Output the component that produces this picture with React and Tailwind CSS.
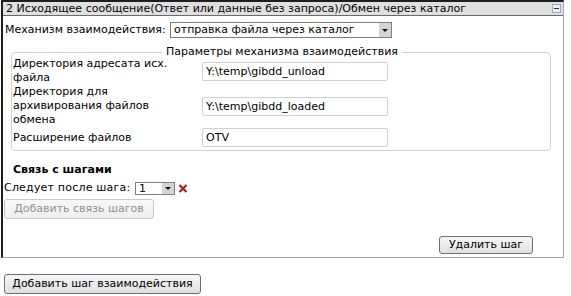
import React from "react";

function Arrow() {
  return (
    <div className="w-0 h-0 border-l-[3px] border-r-[3px] border-t-[3px] border-l-transparent border-r-transparent border-t-[#111]" />
  );
}

function Field({ value }) {
  return (
    <div className="w-[186px] h-[19px] border border-[#d0d0d0] rounded-[2px] bg-white pl-[3px] leading-[17px] whitespace-nowrap">
      {value}
    </div>
  );
}

function Btn({ children, disabled, w }) {
  return (
    <div
      className={`${w} flex items-center justify-center rounded-[3px] border whitespace-nowrap bg-gradient-to-b ${
        disabled ? "border-[#c8c8c8] text-[#909090] from-[#f8f8f8] to-[#eeeeee]" : "border-[#6e6e6e] text-black from-[#f7f7f7] to-[#e0e0e0]"
      }`}
    >
      {children}
    </div>
  );
}

function XIcon() {
  return (
    <svg width="10" height="9" viewBox="0 0 10 9" className="block">
      <path d="M1.5 1 L8.5 8 M8.5 1 L1.5 8" stroke="#a32222" strokeWidth="2.2" strokeLinecap="butt" />
    </svg>
  );
}

export default function App() {
  return (
    <div className="w-[571px] h-[296px] bg-white font-['DejaVu_Sans',sans-serif] text-[11px] text-black overflow-hidden">
      <div className="ml-[1px] w-[563px] h-[258px] border-t-2 border-l-2 border-t-[#1e1e1e] border-l-[#1e1e1e] border-r border-b border-r-[#a6a6a6] border-b-[#a6a6a6] flex flex-col">
        <div className="h-[14px] bg-[#e0e0e0] border-b border-[#6a6a6a] flex items-center justify-between pl-[3px] pr-[2px]">
          <span className="leading-[13px]">2 Исходящее сообщение(Ответ или данные без запроса)/Обмен через каталог</span>
          <div className="w-[9px] h-[9px] border border-[#97a9c9] bg-[#eaeff7] flex items-center justify-center">
            <div className="w-[5px] h-[1px] bg-[#333]" />
          </div>
        </div>

        <div className="flex items-center mt-[6px] pl-[2px] h-[16px]">
          <div className="w-[165px] leading-[14px] whitespace-nowrap">Механизм взаимодействия:</div>
          <div className="flex h-[16px] w-[222px] border border-[#7d7d7d] bg-white">
            <div className="flex-1 pl-[3px] leading-[14px] whitespace-nowrap overflow-hidden">отправка файла через каталог</div>
            <div className="w-[12px] bg-[#d4d4d4] flex items-center justify-center">
              <Arrow />
            </div>
          </div>
        </div>

        <div className="relative ml-[8px] mt-[14px] w-[540px] h-[99px] border border-[#d2d2d2] rounded-[4px]">
          <div className="absolute left-[150px] top-[-8px] bg-white px-[4px] leading-[14px] whitespace-nowrap">
            Параметры механизма взаимодействия
          </div>
          <div className="flex flex-col pt-[4px] pl-[1px]">
            <div className="flex items-center h-[28px]">
              <div className="w-[189px] leading-[14px]">Директория адресата исх.<br />файла</div>
              <Field value="Y:\temp\gibdd_unload" />
            </div>
            <div className="flex items-center h-[42px]">
              <div className="w-[189px] leading-[14px]">Директория для<br />архивирования файлов<br />обмена</div>
              <Field value="Y:\temp\gibdd_loaded" />
            </div>
            <div className="flex items-center h-[19px] mt-[1px]">
              <div className="w-[189px] leading-[14px]">Расширение файлов</div>
              <Field value="OTV" />
            </div>
          </div>
        </div>

        <div className="pl-[10px] mt-[12px] font-bold leading-[14px] h-[14px]">Связь с шагами</div>

        <div className="flex items-center pl-[1px] mt-[4px] h-[14px]">
          <div className="w-[131px] leading-[14px] whitespace-nowrap tracking-[0.2px]">Следует после шага:</div>
          <div className="flex h-[13px] w-[40px] border border-[#7d7d7d] bg-white">
            <div className="flex-1 pl-[3px] leading-[12px]">1</div>
            <div className="w-[12px] bg-[#d4d4d4] flex items-center justify-center">
              <Arrow />
            </div>
          </div>
          <div className="ml-[3px]">
            <XIcon />
          </div>
        </div>

        <div className="pl-[1px] mt-[4px] flex h-[20px]">
          <Btn disabled w="w-[150px] h-[20px]">Добавить связь шагов</Btn>
        </div>

        <div className="flex justify-end pr-[30px] mt-[17px]">
          <Btn w="w-[94px] h-[18px]">Удалить шаг</Btn>
        </div>
      </div>

      <div className="ml-[4px] mt-[16px] flex">
        <Btn w="w-[197px] h-[20px]">Добавить шаг взаимодействия</Btn>
      </div>
    </div>
  );
}
